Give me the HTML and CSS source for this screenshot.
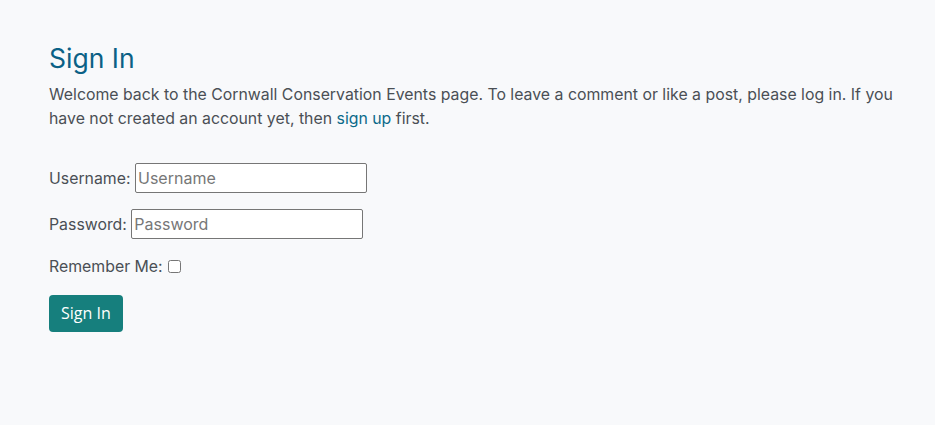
FILE: index.html
```html
<!DOCTYPE html>
<html lang="en">
<head>
<meta charset="utf-8">
<title>Sign In</title>
<link rel="stylesheet" href="styles.css">
</head>
<body>
<main class="page">
  <h1 class="title">Sign In</h1>
  <p class="intro">Welcome back to the Cornwall Conservation Events page. To leave a comment or like a post, please log in. If you have not created an account yet, then <a class="link" href="#">sign up</a> first.</p>
  <form class="form">
    <p class="row"><label for="u">Username:</label> <input class="field" id="u" type="text" placeholder="Username"></p>
    <p class="row"><label for="p">Password:</label> <input class="field" id="p" type="password" placeholder="Password"></p>
    <p class="row row-check"><label for="r">Remember Me:</label> <input class="check" id="r" type="checkbox"></p>
    <button class="btn" type="submit">Sign In</button>
  </form>
</main>
</body>
</html>
```
FILE: styles.css
```css
html, body { margin: 0; padding: 0; }
body {
  background: #f8f9fb;
  color: #4a4f55;
  font-family: Inter, "Liberation Sans", sans-serif;
  font-size: 15.85px;
  line-height: 24px;
}
.page { padding: 43px 28px 0 49px; }
.title {
  margin: 0 0 8px;
  font-size: 26.5px;
  font-weight: 400;
  line-height: 1.2;
  color: #0b6186;
}
.intro { margin: 0 0 32px; }
.link { color: #0b6a8a; text-decoration: none; }
.form { margin: 0; }
.row { margin: 0 0 15px; line-height: 30px; }
.row-check { line-height: 24px; margin-bottom: 16px; }
.field {
  font-family: Inter, "Liberation Sans", sans-serif;
  font-size: 16px;
  width: 232px;
  height: 30px;
  box-sizing: border-box;
  padding: 1px 2px;
  border: 1px solid #767676;
  border-radius: 2px;
  background: #fff;
  color: #333;
  vertical-align: baseline;
}
.field::placeholder { color: #777; }
.check { margin: 0 0 0 1px; width: 13px; height: 13px; vertical-align: -1px; }
.btn {
  margin-top: 0;
  background: #167f7d;
  color: #fff;
  border: 0;
  border-radius: 4px;
  font-family: "Open Sans", sans-serif;
  font-size: 16px;
  padding: 6px 12px;
  height: 37px;
}
```
